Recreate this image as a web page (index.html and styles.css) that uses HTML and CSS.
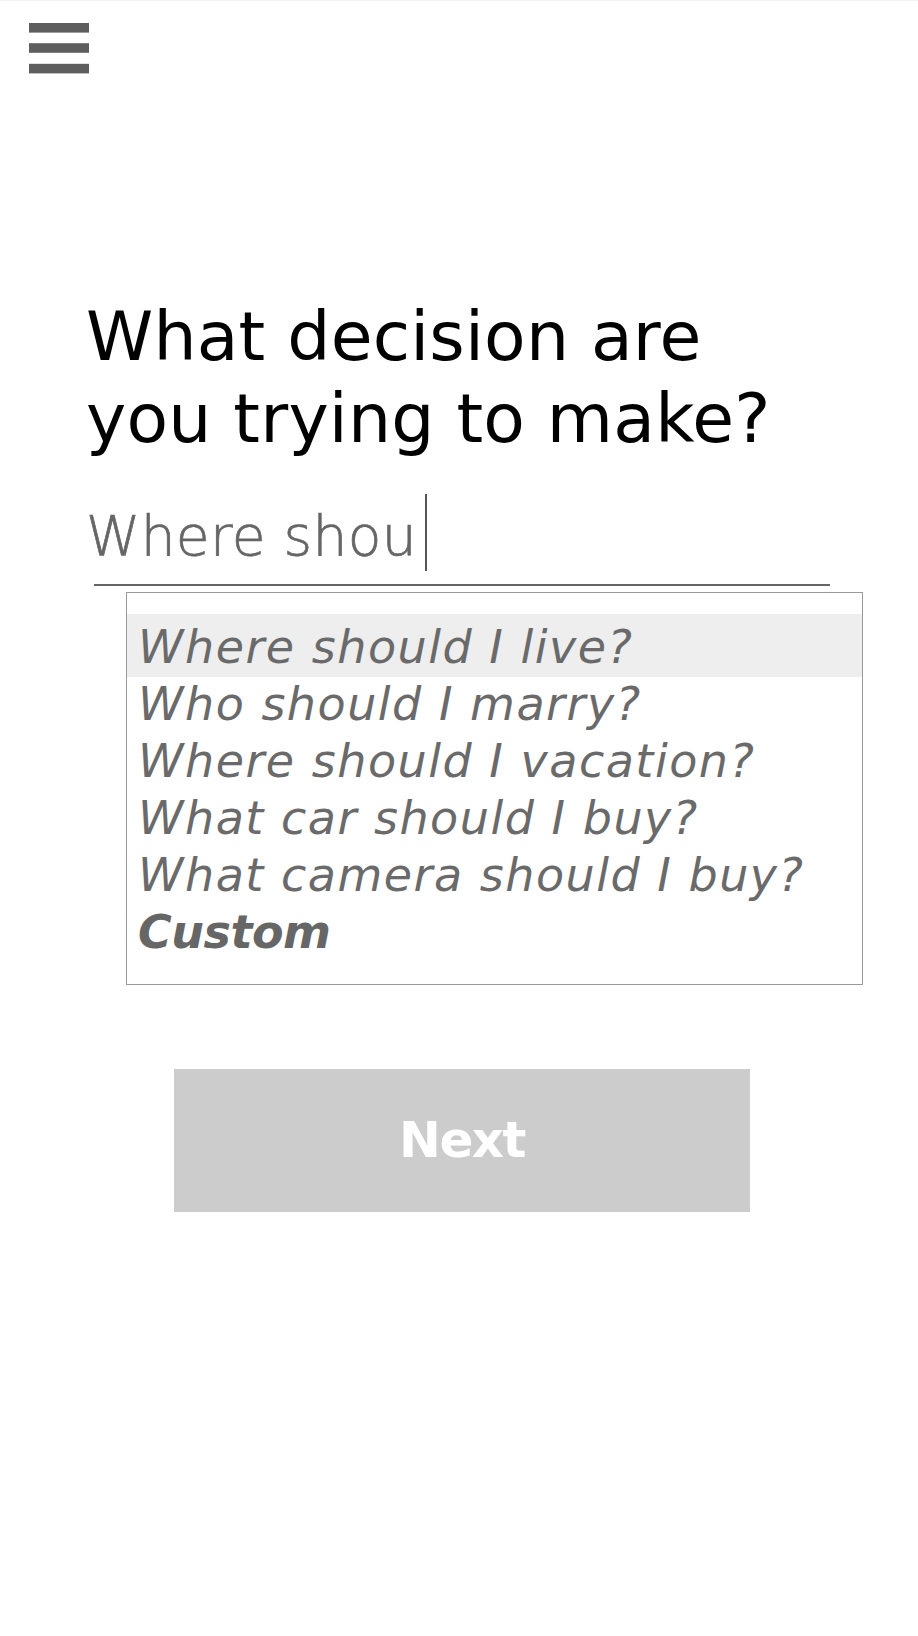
FILE: index.html
```html
<!DOCTYPE html>
<html lang="en">
<head>
<meta charset="utf-8">
<title>Decision</title>
<link rel="stylesheet" href="styles.css">
</head>
<body>
<header class="topbar">
  <button class="menu" aria-label="Menu">
    <svg width="60" height="51" viewBox="0 0 60 51" aria-hidden="true">
      <rect x="0" y="0" width="60" height="9.6" fill="#5e5e5e"/>
      <rect x="0" y="20.2" width="60" height="9.6" fill="#5e5e5e"/>
      <rect x="0" y="40.8" width="60" height="9.6" fill="#5e5e5e"/>
    </svg>
  </button>
</header>
<main class="content">
  <h1 class="question">What decision are<br>you trying to make?</h1>
  <div class="field">
    <span class="typed">Where shou</span><span class="caret"></span>
  </div>
  <div class="underline"></div>
  <ul class="options">
    <li class="option active">Where should I live?</li>
    <li class="option">Who should I marry?</li>
    <li class="option">Where should I vacation?</li>
    <li class="option">What car should I buy?</li>
    <li class="option">What camera should I buy?</li>
    <li class="option custom">Custom</li>
  </ul>
  <button class="next">Next</button>
</main>
</body>
</html>
```
FILE: styles.css
```css
html, body {
  margin: 0;
  padding: 0;
  background: #ffffff;
}

body {
  font-family: "DejaVu Sans", "Liberation Sans", sans-serif;
  width: 918px;
  min-height: 1636px;
}

.topbar {
  height: 100px;
  padding: 23px 0 0 28.5px;
  box-sizing: border-box;
  background: linear-gradient(#f4f4f4, #f4f4f4) top left / 100% 1px no-repeat;
}

.menu {
  display: block;
  padding: 0;
  margin: 0;
  border: 0;
  background: none;
  width: 60px;
  height: 51px;
}

.menu svg {
  display: block;
}

.content {
  display: flex;
  flex-direction: column;
  align-items: flex-start;
}

.question {
  margin: 195.5px 0 0 86px;
  font-size: 68px;
  line-height: 82px;
  font-weight: 400;
  letter-spacing: 0.2px;
  color: #000;
}

.field {
  display: flex;
  align-items: flex-start;
  margin: 37px 0 0 86px;
  height: 78px;
}

.typed {
  font-size: 55px;
  line-height: 78px;
  color: #666;
  font-weight: 200;
  letter-spacing: 0.3px;
  -webkit-text-stroke: 0.7px #666;
}

.caret {
  display: block;
  width: 2px;
  height: 77px;
  margin: -3px 0 0 8px;
  background: #555;
}

.underline {
  margin: 9px 0 0 94px;
  width: 736px;
  height: 2px;
  background: #666;
}

.options {
  list-style: none;
  margin: 6.5px 0 0 126px;
  padding: 21px 0 23px;
  width: 737px;
  box-sizing: border-box;
  border: 1px solid #9a9a9a;
}

.option {
  padding: 0 0 0 11px;
  font-size: 46px;
  line-height: 57px;
  font-style: italic;
  font-weight: 400;
  letter-spacing: 1.5px;
  color: #6a6a6a;
  white-space: nowrap;
}

.option.active {
  background: #eeeeee;
  padding-top: 4.6px;
  padding-bottom: 1.4px;
  margin-bottom: -1.4px;
}

.option.custom {
  font-weight: 700;
  letter-spacing: -0.5px;
  color: #666;
}

.next {
  margin: 84px 0 0 174px;
  width: 576px;
  height: 143px;
  border: 0;
  background: #cccccc;
  color: #ffffff;
  font-family: "DejaVu Sans", "Liberation Sans", sans-serif;
  font-size: 50px;
  font-weight: 700;
  letter-spacing: -1.5px;
  padding: 0;
}
```
